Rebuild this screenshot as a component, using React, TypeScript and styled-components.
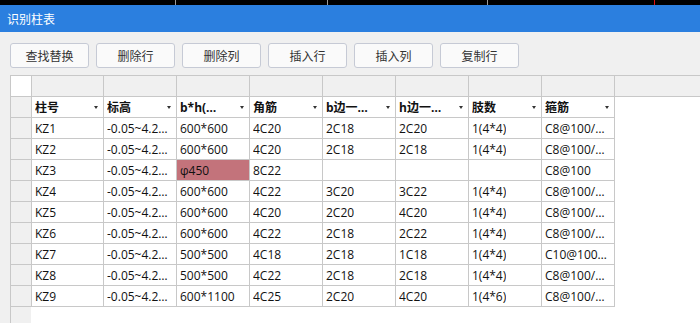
import React from "react";
import styled, { createGlobalStyle } from "styled-components";

const Global = createGlobalStyle`
  html, body { margin: 0; padding: 0; background: #f0f0f0; overflow: hidden; }
  body { font-family: "Open Sans", "Noto Sans CJK SC", sans-serif; font-size: 12px; color: #111; }
`;

const Page = styled.div`
  width: 700px;
  height: 323px;
  display: flex;
  flex-direction: column;
  background: #f0f0f0;
`;

const TopStrip = styled.div`
  height: 5px;
  flex: none;
  background:
    linear-gradient(to right, transparent 175px, #9a9a9a 175px, #9a9a9a 176px, transparent 176px),
    linear-gradient(to right, transparent 327px, #9a9a9a 327px, #9a9a9a 328px, transparent 328px),
    linear-gradient(to right, transparent 487px, #9a9a9a 487px, #9a9a9a 488px, transparent 488px),
    linear-gradient(to right, transparent 654px, #e01010 654px, #e01010 655px, transparent 655px),
    #000;
`;

const TitleBar = styled.div`
  height: 27px;
  flex: none;
  background: #2b7fdf;
  color: #fff;
  display: flex;
  align-items: center;
  padding-left: 7px;
  font-family: "Noto Sans CJK SC", sans-serif;
  font-size: 12px;
`;

const Toolbar = styled.div`
  display: flex;
  gap: 7px;
  padding: 11px 0 0 10px;
  flex: none;
`;

const Button = styled.button`
  box-sizing: border-box;
  width: 79px;
  height: 25px;
  border: 1px solid #c6cad5;
  border-radius: 3px;
  background: #fafafa;
  color: #333;
  font-family: "Noto Sans CJK SC", sans-serif;
  font-size: 12px;
  padding: 0;
  cursor: pointer;
`;

const Sheet = styled.div`
  flex: 1;
  margin: 7px 0 0 10px;
  border-top: 1px solid #c8c8c8;
  border-left: 1px solid #c8c8c8;
  background: linear-gradient(to right, #f0f0f0 20px, #fff 20px);
  display: flex;
  flex-direction: column;
  overflow: hidden;
`;

const LetterRow = styled.div`
  display: flex;
  height: 21px;
  box-sizing: border-box;
  background: #f0f0f0;
  border-bottom: 1px solid #c8c8c8;
  flex: none;
`;

const Corner = styled.div`
  box-sizing: border-box;
  width: 21px;
  height: 20px;
  background: #fff;
  border-right: 1px solid #c8c8c8;
`;

const LetterCell = styled.div<{ $w: number }>`
  box-sizing: border-box;
  width: ${(p) => p.$w}px;
  height: 20px;
  border-right: 1px solid #c8c8c8;
`;

const Row = styled.div`
  display: flex;
  flex: none;
`;

const RowHead = styled.div`
  box-sizing: border-box;
  width: 21px;
  height: 21px;
  border-right: 1px solid #c8c8c8;
  border-bottom: 1px solid #c8c8c8;
`;

const Cell = styled.div<{ $w: number; $hl?: boolean }>`
  box-sizing: border-box;
  width: ${(p) => p.$w}px;
  height: 21px;
  border-right: 1px solid #c8c8c8;
  border-bottom: 1px solid #c8c8c8;
  padding: 0 3px 0 3px;
  display: flex;
  align-items: center;
  background: ${(p) => (p.$hl ? "#c3737b" : "#fff")};
  white-space: nowrap;
  overflow: hidden;
`;

const HeadCell = styled(Cell)`
  font-weight: bold;
  justify-content: space-between;
  padding-right: 5px;
`;

const Label = styled.span`
  overflow: hidden;
  text-overflow: ellipsis;
`;

const Caret = styled.span`
  flex: none;
  width: 0;
  height: 0;
  border-left: 2.5px solid transparent;
  border-right: 2.5px solid transparent;
  border-top: 3px solid #333;
  margin-top: 1px;
`;

const widths = [72, 73, 73, 73, 73, 73, 73, 73];

const headers = ["柱号", "标高", "b*h(…", "角筋", "b边一…", "h边一…", "肢数", "箍筋"];

const E = "-0.05~4.2…";
const rows: string[][] = [
  ["KZ1", E, "600*600", "4C20", "2C18", "2C20", "1(4*4)", "C8@100/…"],
  ["KZ2", E, "600*600", "4C20", "2C18", "2C18", "1(4*4)", "C8@100/…"],
  ["KZ3", E, "φ450", "8C22", "", "", "", "C8@100"],
  ["KZ4", E, "600*600", "4C22", "3C20", "3C22", "1(4*4)", "C8@100/…"],
  ["KZ5", E, "600*600", "4C20", "2C20", "4C20", "1(4*4)", "C8@100/…"],
  ["KZ6", E, "600*600", "4C22", "2C18", "2C22", "1(4*4)", "C8@100/…"],
  ["KZ7", E, "500*500", "4C18", "2C18", "1C18", "1(4*4)", "C10@100…"],
  ["KZ8", E, "500*500", "4C22", "2C18", "2C18", "1(4*4)", "C8@100/…"],
  ["KZ9", E, "600*1100", "4C25", "2C20", "4C20", "1(4*6)", "C8@100/…"],
];

const buttons = ["查找替换", "删除行", "删除列", "插入行", "插入列", "复制行"];

export default function App() {
  return (
    <Page>
      <Global />
      <TopStrip />
      <TitleBar>识别柱表</TitleBar>
      <Toolbar>
        {buttons.map((b) => (
          <Button key={b}>{b}</Button>
        ))}
      </Toolbar>
      <Sheet>
        <LetterRow>
          <Corner />
          {widths.map((w, i) => (
            <LetterCell key={i} $w={w} />
          ))}
        </LetterRow>
        <Row>
          <RowHead />
          {headers.map((h, i) => (
            <HeadCell key={h} $w={widths[i]}>
              <Label>{h}</Label>
              <Caret />
            </HeadCell>
          ))}
        </Row>
        {rows.map((r) => (
          <Row key={r[0]}>
            <RowHead />
            {r.map((v, i) => (
              <Cell key={i} $w={widths[i]} $hl={r[0] === "KZ3" && i === 2}>
                <Label>{v}</Label>
              </Cell>
            ))}
          </Row>
        ))}
      </Sheet>
    </Page>
  );
}
